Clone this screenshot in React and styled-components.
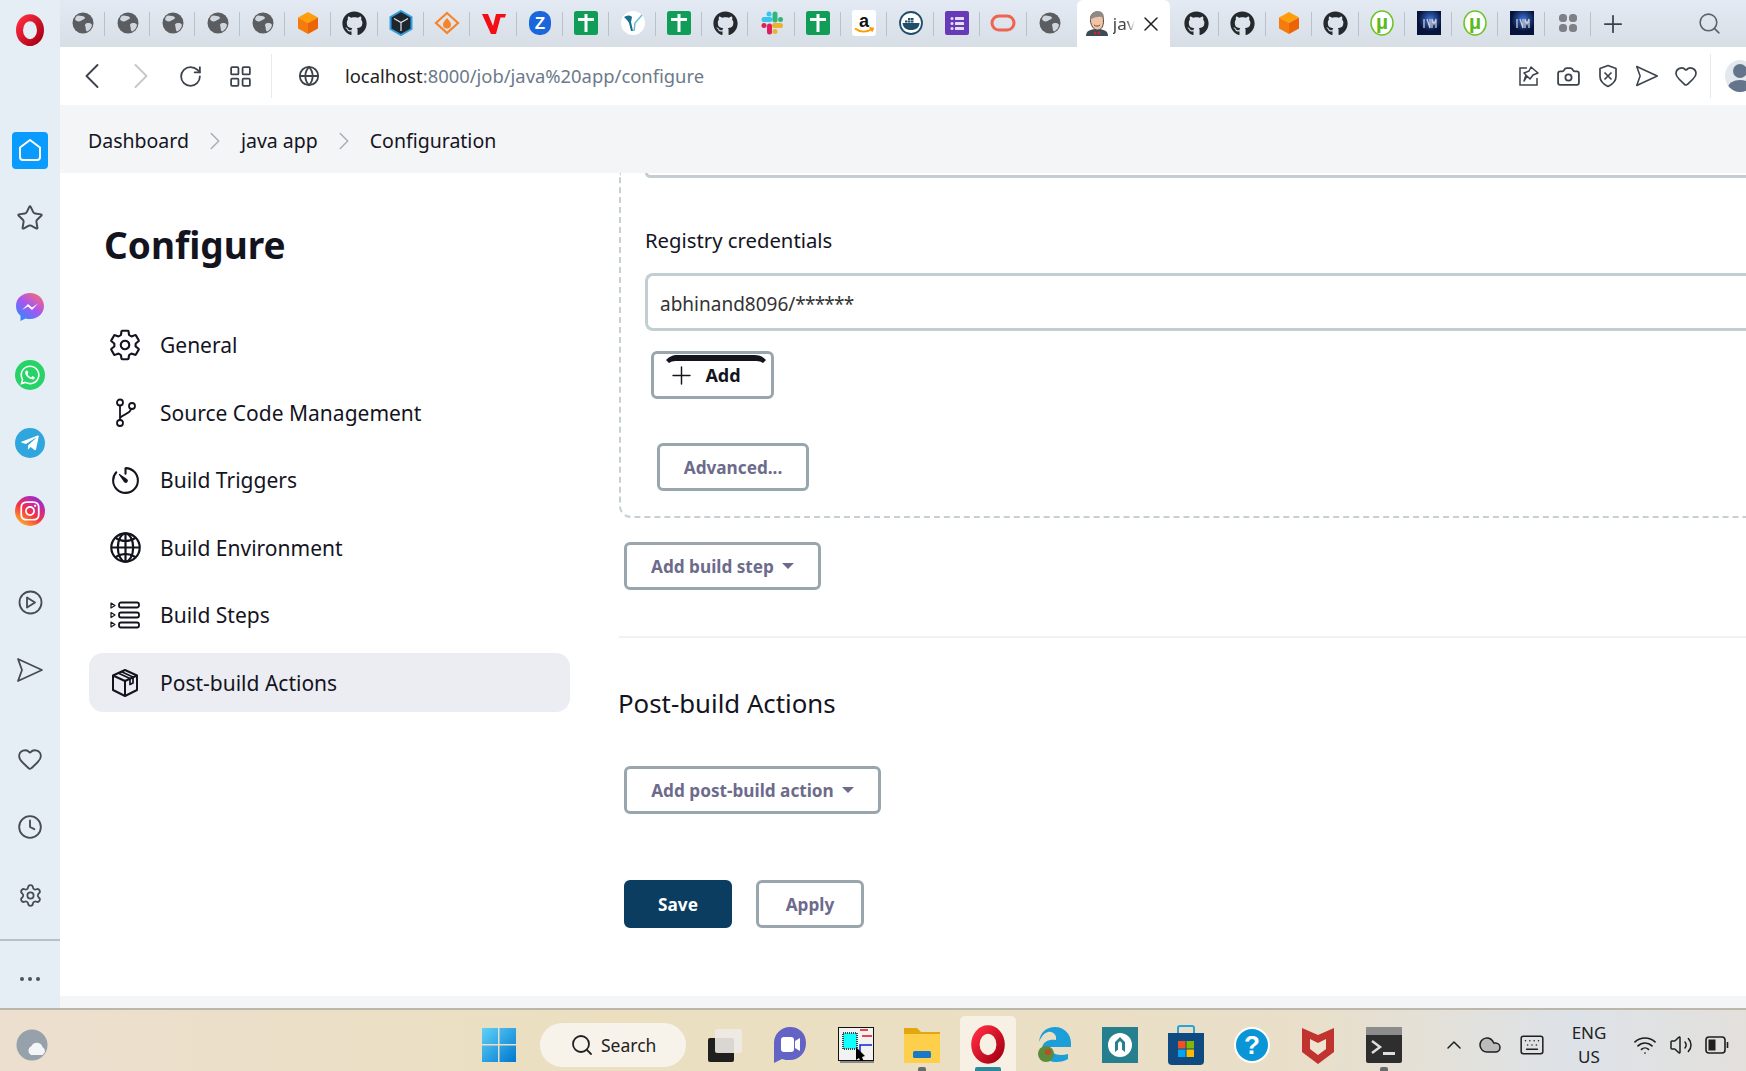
import React from 'react';
import styled, { createGlobalStyle } from 'styled-components';
import { FaGithub, FaWhatsapp, FaTelegramPlane, FaInstagram } from 'react-icons/fa';
import { IoSettingsOutline, IoTimerOutline, IoGlobeOutline } from 'react-icons/io5';
import {
  ChevronLeft, ChevronRight, RotateCw, LayoutGrid, Globe, X, Plus, Search, Camera,
  Heart, Star, Clock, Settings, Wifi, Volume2, ChevronUp, Keyboard, Cloud,
} from 'lucide-react';

const UI_FONT = '"Noto Sans", "Open Sans", sans-serif';

const GlobalStyle = createGlobalStyle`
  html, body { margin: 0; padding: 0; }
  body { font-family: ${UI_FONT}; color: #14141f; background: #fff; overflow: hidden; }
  * { box-sizing: border-box; }
  svg { flex: none; }
`;

const Screen = styled.div`
  width: 1746px;
  height: 1071px;
  display: flex;
  flex-direction: column;
  overflow: hidden;
`;

const Desktop = styled.div`
  height: 1008px;
  display: flex;
`;

const Sidebar = styled.aside`
  width: 60px;
  flex: none;
  display: flex;
  flex-direction: column;
  align-items: center;
  background: #e5edf5;
`;

const LogoSlot = styled.div`
  height: 60px;
  margin-bottom: 56px;
  display: flex;
  align-items: center;
  justify-content: center;
`;

const SideGroup = styled.div`
  display: flex;
  flex-direction: column;
  margin-bottom: ${(p) => p.$gap ?? 21}px;
`;

const SideItem = styled.div`
  width: 60px;
  height: 68px;
  display: flex;
  align-items: center;
  justify-content: center;
  color: #454c56;
`;

const HomeButton = styled.div`
  width: 36px;
  height: 37px;
  border-radius: 4px;
  background: #0a9bff;
  display: flex;
  align-items: center;
  justify-content: center;
`;

const Bubble = styled.div`
  width: 30px;
  height: 30px;
  border-radius: 50%;
  background: ${(p) => p.$bg};
  color: #fff;
  display: flex;
  align-items: center;
  justify-content: center;
`;

const SideFooter = styled.div`
  margin-top: auto;
  width: 100%;
  height: 69px;
  padding-top: 8px;
  border-top: 2px solid #b9c0ca;
  display: flex;
  align-items: center;
  justify-content: center;
  gap: 4px;
`;

const Dot = styled.span`
  width: 4px;
  height: 4px;
  border-radius: 50%;
  background: #4b525c;
`;

const Browser = styled.div`
  flex: 1;
  min-width: 0;
  display: flex;
  flex-direction: column;
`;

const TabStrip = styled.div`
  height: 47px;
  flex: none;
  display: flex;
  align-items: stretch;
  background: linear-gradient(180deg, #e3eaf3, #d7dee6);
`;

const TabSlot = styled.div`
  width: ${(p) => p.$w}px;
  flex: none;
  position: relative;
  display: flex;
  align-items: center;
  justify-content: center;
  padding-bottom: 1px;
  &::after {
    content: '';
    display: ${(p) => (p.$last ? 'none' : 'block')};
    position: absolute;
    right: 0;
    top: 12px;
    height: 24px;
    width: 1px;
    background: #b9c1cb;
  }
`;

const ActiveTab = styled.div`
  width: 93px;
  flex: none;
  background: #fff;
  border-radius: 6px 6px 0 0;
  display: flex;
  align-items: center;
  padding-left: 8px;
  margin: 0 3px 0 4px;
`;

const TabTitle = styled.span`
  width: 22px;
  margin-left: 4px;
  overflow: hidden;
  font-size: 17px;
  color: #444;
  white-space: nowrap;
  mask-image: linear-gradient(90deg, #000 60%, transparent);
`;

const NewTab = styled.div`
  margin-left: 9px;
  width: 26px;
  display: flex;
  align-items: center;
  justify-content: center;
  color: #3a414b;
`;

const StripSearch = styled.div`
  margin-left: auto;
  margin-right: 24px;
  display: flex;
  align-items: center;
  color: #5b626c;
`;

const AddressBar = styled.div`
  height: 58px;
  flex: none;
  background: #fff;
  display: flex;
  align-items: center;
  color: #3c434d;
`;

const NavGlyph = styled.div`
  width: ${(p) => p.$w}px;
  flex: none;
  display: flex;
  justify-content: center;
  color: ${(p) => p.$color || '#3c434d'};
`;

const BarDivider = styled.div`
  width: 1px;
  height: 44px;
  flex: none;
  margin-left: ${(p) => p.$ml || 0}px;
  background: #e6e9ed;
`;

const Url = styled.div`
  margin-left: 0;
  padding-bottom: 2px;
  font-size: 18.4px;
  color: #6c7a89;
  white-space: nowrap;
  & b { font-weight: 400; color: #222; }
`;

const BarActions = styled.div`
  margin-left: auto;
  display: flex;
  align-items: center;
  margin-right: -9px;
`;

const Avatar = styled.div`
  width: 30px;
  margin-left: 14px;
  height: 32px;
  border-radius: 50%;
  background: #e2e8ee;
  overflow: hidden;
  display: flex;
  justify-content: center;
`;

const Breadcrumb = styled.nav`
  height: 68px;
  flex: none;
  background: #f4f5f7;
  display: flex;
  align-items: center;
  padding: 3px 0 0 28px;
  font-size: 19.5px;
  color: #14141f;
`;

const Crumb = styled.span`
  white-space: nowrap;
`;

const CrumbSep = styled.span`
  width: 52px;
  display: flex;
  justify-content: center;
  color: #a9adb8;
`;

const Content = styled.div`
  flex: 1;
  min-height: 0;
  display: flex;
  overflow: hidden;
  background: #fff;
`;

const SidePanel = styled.div`
  width: 559px;
  flex: none;
  padding: 48px 49px 0 29px;
`;

const PageTitle = styled.h1`
  margin: 0 0 46.5px 15px;
  font-size: 37px;
  line-height: 48px;
  font-weight: 700;
  color: #14141f;
`;

const NavList = styled.div`
  display: flex;
  flex-direction: column;
  gap: 8.5px;
`;

const NavItem = styled.div`
  height: 59px;
  border-radius: 14px;
  display: flex;
  align-items: center;
  padding-left: 21px;
  gap: 20px;
  font-size: 21px;
  background: ${(p) => (p.$active ? '#ecedf2' : 'transparent')};
`;

const NavIcon = styled.div`
  width: 30px;
  height: 30px;
  flex: none;
  display: flex;
  align-items: center;
  justify-content: center;
  color: #14141f;
`;

const Main = styled.main`
  flex: 1;
  min-width: 0;
  display: flex;
  flex-direction: column;
  align-items: flex-start;
`;

const DashedBox = styled.div`
  align-self: stretch;
  margin-right: -20px;
  padding: 0 0 25px 24px;
  border-left: 2px dashed #c6d0d4;
  border-bottom: 2px dashed #c6d0d4;
  border-bottom-left-radius: 12px;
  display: flex;
  flex-direction: column;
  align-items: flex-start;
`;

const FieldStub = styled.div`
  align-self: stretch;
  height: 5px;
  border: 3px solid #c3ced2;
  border-top: none;
  border-radius: 0 0 0 8px;
`;

const FieldLabel = styled.label`
  margin-top: 48px;
  font-size: 20.3px;
  line-height: 28px;
  color: #14141f;
`;

const TextField = styled.div`
  align-self: stretch;
  height: 58px;
  margin-top: 19px;
  padding: 3px 0 0 12px;
  border: 3px solid #c3ced2;
  border-right: none;
  border-radius: 8px 0 0 8px;
  display: flex;
  align-items: center;
  font-size: 19px;
  color: #333;
`;

const Mask = styled.span`
  letter-spacing: -0.8px;
`;

const Button = styled.button`
  position: relative;
  width: ${(p) => p.$w}px;
  height: 48px;
  margin: ${(p) => p.$m || '0'};
  padding: 0;
  border: 3px solid ${(p) => (p.$primary ? '#0a3d5f' : '#9aa6ad')};
  border-radius: 6px;
  background: ${(p) => (p.$primary ? '#0a3d5f' : '#fff')};
  color: ${(p) => (p.$primary ? '#fff' : '#6d6b8c')};
  font-family: ${UI_FONT};
  font-size: 17.2px;
  font-weight: 700;
  display: flex;
  align-items: center;
  justify-content: center;
  gap: 8px;
`;

const AddButton = styled(Button)`
  color: #14141f;
  font-size: 18px;
  gap: 9px;
  padding-right: 17px;
`;

const Caret = styled.span`
  width: 0;
  height: 0;
  border-left: 6px solid transparent;
  border-right: 6px solid transparent;
  border-top: 6px solid #6d6b8c;
`;

const Scribble = styled.svg`
  position: absolute;
  left: 12px;
  top: 0;
`;

const Rule = styled.div`
  align-self: stretch;
  height: 2px;
  margin-top: 46px;
  background: #f0f1f3;
`;

const SectionTitle = styled.h2`
  margin: 49px 0 0 -1px;
  font-size: 25.8px;
  line-height: 32px;
  font-weight: 400;
  color: #14141f;
`;

const ButtonRow = styled.div`
  display: flex;
  gap: 24px;
  margin: 66px 0 0 5px;
`;

const PageFoot = styled.div`
  height: 12px;
  flex: none;
  background: #f4f5f7;
`;

const Taskbar = styled.footer`
  height: 63px;
  flex: none;
  display: flex;
  align-items: center;
  border-top: 2px solid #bcb6ab;
  background: linear-gradient(90deg, #ecdfcf 0%, #ebdfc0 35%, #eadfc4 60%, #e9dfca 75%, #dde2e8 90%, #e3e0dc 100%);
`;

const TaskSlot = styled.div`
  width: ${(p) => p.$w || 66}px;
  height: 61px;
  flex: none;
  position: relative;
  display: flex;
  align-items: center;
  justify-content: center;
  padding-top: 8px;
  margin-left: ${(p) => p.$ml || 0}px;
  color: #1f1f1f;
  ${(p) => p.$active && `
    background: rgba(255,255,255,0.55);
    border-radius: 5px 5px 0 0;
    width: 56px;
    height: 55px;
    padding-top: 2px;
    margin: 6px 5px 0;
  `}
`;

const RunDot = styled.span`
  position: absolute;
  bottom: 0;
  left: 50%;
  transform: translateX(-50%);
  width: ${(p) => (p.$wide ? 26 : 8)}px;
  height: 4px;
  border-radius: 2px 2px 0 0;
  background: ${(p) => (p.$wide ? '#2a8a9c' : '#6b6b6b')};
`;

const SearchPill = styled.div`
  width: 146px;
  height: 44px;
  margin: 8px 5px 0 8px;
  flex: none;
  border-radius: 22px;
  background: #f8f3ea;
  display: flex;
  align-items: center;
  padding-left: 30px;
  gap: 7px;
  font-size: 17.5px;
  color: #222;
`;

const Tray = styled.div`
  display: flex;
  align-items: center;
  padding-left: 19px;
`;

const Lang = styled.div`
  width: 60px;
  padding-top: 8px;
  text-align: center;
  font-size: 17px;
  line-height: 24px;
  color: #222;
  margin: 0 8px 0 6px;
`;

/* ---------- drawn icons ---------- */

const OperaLogo = ({ size = 30 }) => (
  <svg width={size} height={size * 1.08} viewBox="0 0 30 32">
    <defs>
      <linearGradient id="op" x1="0" y1="0" x2="1" y2="1">
        <stop offset="0" stopColor="#ff2b40" />
        <stop offset="1" stopColor="#a70014" />
      </linearGradient>
    </defs>
    <ellipse cx="15" cy="16" rx="10.5" ry="12.5" fill="none" stroke="url(#op)" strokeWidth="7" />
  </svg>
);

const WebGlobe = () => (
  <svg width="22" height="22" viewBox="0 0 22 22">
    <circle cx="11" cy="11" r="10.5" fill="#5b5d60" />
    <path d="M6 3.500c3 .5 5 0 6.500 1.500s-1 2.500-3 3.500S6 10 4 8.500s0-4.500 2-5zM14 11.500c2.500-1 5-.5 6 1.500-.5 3-2.500 5.500-5 6.500-1.500-1-1-2.500-1.500-4.500s-1-2.500.5-3.500z" fill="#cfd6de" />
  </svg>
);

const GhIcon = () => <FaGithub size={25} color="#25292e" />;

const OrangeCube = ({ size = 24 }) => (
  <svg width={size} height={size} viewBox="0 0 24 24">
    <path d="M12 1l10 5.500L12 12 2 6.500z" fill="#ff9d0a" />
    <path d="M2 6.500L12 12v11L2 17.500z" fill="#f57c0c" />
    <path d="M22 6.500L12 12v11l10-5.500z" fill="#ec6408" />
  </svg>
);

const BlackCube = () => (
  <svg width="24" height="26" viewBox="0 0 24 26">
    <path d="M12 1l10.500 6v12L12 25 1.500 19V7z" fill="#20262d" stroke="#2f9fe0" strokeWidth="2" />
    <path d="M5 8.500l7 4 7-4M12 12.500V21" fill="none" stroke="#dfe6ee" strokeWidth="1.2" />
  </svg>
);

const DiamondIcon = () => (
  <svg width="26" height="24" viewBox="0 0 26 24">
    <path d="M13 2l11 10-11 10L2 12z" fill="none" stroke="#f5842a" strokeWidth="2.2" />
    <path d="M13 7c2.500 3 4 4.500 4 6.500a4 4 0 0 1-8 0c0-2 1.500-3.500 4-6.500z" fill="#f5842a" />
  </svg>
);

const RedV = () => (
  <svg width="26" height="24" viewBox="0 0 26 24">
    <path d="M1 3h6l5 12L15 3h10l-1 3.500h-4.500L15 23h-5z" fill="#f30d14" />
  </svg>
);

const ZIcon = () => (
  <svg width="24" height="26" viewBox="0 0 24 26">
    <rect x="1" y="1" width="22" height="24" rx="10" fill="#1a66dd" />
    <text x="12" y="19" textAnchor="middle" fontFamily="Liberation Sans, sans-serif" fontWeight="700" fontSize="17" fill="#fff">Z</text>
  </svg>
);

const SheetIcon = () => (
  <svg width="24" height="24" viewBox="0 0 24 24">
    <rect width="24" height="24" rx="2.500" fill="#0f9d58" />
    <path d="M10.500 3h3v4H20v3h-6.500v11h-3V10H4V7h6.500z" fill="#fff" />
  </svg>
);

const BirdIcon = () => (
  <svg width="24" height="26" viewBox="0 0 24 26">
    <circle cx="12" cy="13" r="12" fill="#fff" />
    <path d="M3 7c3-2 6-2 8 0l-1 5 2 9h-2l-2-8C7 11 5 9 3 7z" fill="#1a6e8e" />
    <path d="M21 5l-7 8-1 8" fill="none" stroke="#6bb9d6" strokeWidth="1.500" />
  </svg>
);

const SlackIcon = () => (
  <svg width="24" height="26" viewBox="0 0 24 26">
    <g strokeWidth="5" strokeLinecap="round" fill="none">
      <path d="M4 9.500h6" stroke="#36c5f0" />
      <path d="M15 4v6" stroke="#2eb67d" />
      <path d="M14.500 15.500h6" stroke="#ecb22e" />
      <path d="M9.500 16v6" stroke="#e01e5a" />
    </g>
    <circle cx="9" cy="4" r="2.500" fill="#36c5f0" />
    <circle cx="20.500" cy="9.500" r="2.500" fill="#2eb67d" />
    <circle cx="15" cy="21.500" r="2.500" fill="#ecb22e" />
    <circle cx="4" cy="15.500" r="2.500" fill="#e01e5a" />
  </svg>
);

const AmazonIcon = () => (
  <svg width="24" height="26" viewBox="0 0 24 26">
    <rect width="24" height="26" rx="3" fill="#fff" />
    <path d="M3 18.500c5 4 12 4 17 .5M17.500 18l3.500.5-1 3" fill="none" stroke="#ff9900" strokeWidth="1.800" />
    <text x="12" y="17" textAnchor="middle" fontFamily="Liberation Sans, sans-serif" fontWeight="700" fontSize="18" fill="#111">a</text>
  </svg>
);

const DockerIcon = () => (
  <svg width="24" height="24" viewBox="0 0 24 24">
    <circle cx="12" cy="12" r="11" fill="#fff" stroke="#1f4e68" strokeWidth="1.800" />
    <path d="M3.500 12h17c0 4.500-3.500 7-8.500 7s-8-2.500-8.500-7zM6 9.500h2.500v2H6zM9 9.500h2.500v2H9zM12 9.500h2.500v2H12zM9 7h2.500v2H9zM12 7h2.500v2H12z" fill="#1f4e68" />
  </svg>
);

const FormsIcon = () => (
  <svg width="24" height="24" viewBox="0 0 24 24">
    <rect width="24" height="24" rx="2" fill="#673ab7" />
    <g fill="#e6ddf5">
      <circle cx="7" cy="7.500" r="1.500" /><rect x="10" y="6" width="9" height="3" rx="0.500" />
      <circle cx="7" cy="12.500" r="1.500" /><rect x="10" y="11" width="9" height="3" rx="0.500" />
      <circle cx="7" cy="17.500" r="1.500" /><rect x="10" y="16" width="9" height="3" rx="0.500" />
    </g>
  </svg>
);

const OracleIcon = () => (
  <svg width="26" height="20" viewBox="0 0 26 20">
    <rect x="2" y="3" width="22" height="14" rx="7" fill="none" stroke="#ee6450" strokeWidth="3" />
  </svg>
);

const TorrentIcon = () => (
  <svg width="24" height="26" viewBox="0 0 24 26">
    <ellipse cx="12" cy="13" rx="11" ry="12" fill="#fff" stroke="#6cc327" strokeWidth="1.500" />
    <text x="12" y="19" textAnchor="middle" fontFamily="Liberation Sans, sans-serif" fontWeight="700" fontSize="21" fill="#5fb91d">µ</text>
  </svg>
);

const IdmIcon = () => (
  <svg width="24" height="24" viewBox="0 0 24 24">
    <defs>
      <radialGradient id="idm" cx="0.55" cy="0.35" r="0.5">
        <stop offset="0" stopColor="#3d73d8" />
        <stop offset="1" stopColor="#06133a" />
      </radialGradient>
    </defs>
    <rect width="24" height="24" fill="url(#idm)" />
    <path d="M7 8v9M10 8l3 9V8M15 17V8l2 5 2-5v9" fill="none" stroke="#c9cdd6" strokeWidth="1.300" />
  </svg>
);

const AppsIcon = () => (
  <svg width="20" height="20" viewBox="0 0 20 20" fill="#7d8086">
    <rect x="1" y="1" width="8" height="8" rx="3.500" />
    <rect x="11" y="1" width="8" height="8" rx="3.500" />
    <rect x="1" y="11" width="8" height="8" rx="3.500" />
    <rect x="11" y="11" width="8" height="8" rx="3.500" />
  </svg>
);

const JenkinsFace = () => (
  <svg width="24" height="27" viewBox="0 0 24 27">
    <path d="M1 26c0-5 4-7 11-7s11 2 11 7z" fill="#3d4a57" />
    <path d="M12 2c-5 0-7 4-6.500 9 .3 4 3 9 7 9s6-4 6-9c0-5-2.500-9-6.500-9z" fill="#efc4a8" stroke="#55493f" strokeWidth="1" />
    <path d="M5 10C5 4 9 1 13 1s6 3 6 7c-3-2-9-2-14 2z" fill="#8f8a84" />
    <path d="M9 21l3 2 3-2v4l-3-2-3 2z" fill="#c8272c" />
    <path d="M9 15c2 1.500 4 1.500 6 0" fill="none" stroke="#7a4a33" strokeWidth="1" />
  </svg>
);

const HomeGlyph = () => (
  <svg width="26" height="26" viewBox="0 0 26 26">
    <path d="M13 3L23 10.500V20a3 3 0 0 1-3 3H6a3 3 0 0 1-3-3V10.500z" fill="none" stroke="#fff" strokeWidth="2" strokeLinejoin="round" />
  </svg>
);

const Messenger = () => (
  <svg width="30" height="30" viewBox="0 0 30 30">
    <defs>
      <linearGradient id="msg" x1="0.2" y1="1" x2="0.9" y2="0">
        <stop offset="0" stopColor="#2a8cff" />
        <stop offset="0.5" stopColor="#a855f0" />
        <stop offset="1" stopColor="#ff6d6d" />
      </linearGradient>
    </defs>
    <path d="M15 1C7 1 1 6.500 1 14c0 4 1.700 7.400 4.500 9.800V29l5-2.600c1.400.4 2.900.6 4.500.6 8 0 14-5.700 14-13S23 1 15 1z" fill="url(#msg)" />
    <path d="M7 18l6-6 4 3.500 6-4-6 6.500-4-3.500z" fill="#fff" />
  </svg>
);

const PlayCircle = () => (
  <svg width="25" height="25" viewBox="0 0 25 25" fill="none" stroke="#454c56" strokeWidth="1.800">
    <circle cx="12.500" cy="12.500" r="11" />
    <path d="M9 7.500l8 5-8 5z" strokeLinejoin="round" />
  </svg>
);

const SendGlyph = ({ size = 28, color = '#454c56' }) => (
  <svg width={size} height={size} viewBox="0 0 28 28" fill="none" stroke={color} strokeWidth="1.800" strokeLinejoin="round">
    <path d="M2 3l24 11L2 25l4-11z" />
  </svg>
);

const PinBox = () => (
  <svg width="22" height="22" viewBox="0 0 22 22" fill="none" stroke="#3c434d" strokeWidth="1.500">
    <path d="M9 3H2v17h17v-7" />
    <path d="M13 2l7 6-5 2-3 4-3-3-3 5 2-6-2-2 5-2z" strokeLinejoin="round" />
  </svg>
);

const ShieldX = () => (
  <svg width="20" height="24" viewBox="0 0 20 24" fill="none" stroke="#3c434d" strokeWidth="1.700">
    <path d="M10 1.500l8 3v8c0 5-4 8-8 10-4-2-8-5-8-10v-8z" strokeLinejoin="round" />
    <path d="M6.500 8.500l7 7M13.500 8.500l-7 7" />
  </svg>
);

const BranchIcon = () => (
  <svg width="24" height="30" viewBox="0 0 24 30" fill="none" stroke="#14141f" strokeWidth="1.800">
    <circle cx="7" cy="4.500" r="3" />
    <circle cx="7" cy="25" r="3" />
    <circle cx="19" cy="8" r="3" />
    <path d="M7 7.500V22M18 11c-1 5-8 5-11 9" />
  </svg>
);

const StepsIcon = () => (
  <svg width="30" height="28" viewBox="0 0 30 28" fill="none" stroke="#14141f" strokeWidth="1.800">
    <path d="M1 2l4 2.500L1 7zM1 11.500l4 2.500-4 2.500zM1 21l4 2.500L1 26z" strokeWidth="1.200" strokeLinejoin="round" />
    <rect x="9" y="1.500" width="20" height="5" rx="2" />
    <rect x="9" y="11.500" width="20" height="5" rx="2" />
    <rect x="9" y="21.500" width="20" height="5" rx="2" />
  </svg>
);

const PackageIcon = () => (
  <svg width="30" height="30" viewBox="0 0 30 30" fill="none" stroke="#14141f" strokeWidth="2" strokeLinejoin="round">
    <path d="M15 2l12 5.500v14.500L15 28 3 22V7.500z" />
    <path d="M3 7.500L15 13l12-5.500M15 13v15" />
    <path d="M8 5l12 5.500v6l3-1.500v-6L11 3.500" strokeWidth="1.700" />
  </svg>
);

const WinLogo = () => (
  <svg width="36" height="36" viewBox="0 0 36 36">
    <defs>
      <linearGradient id="win" x1="0" y1="0" x2="1" y2="1">
        <stop offset="0" stopColor="#5fd2f7" />
        <stop offset="1" stopColor="#0077d0" />
      </linearGradient>
    </defs>
    <path d="M1 1h16v16H1zM18.500 1H35v16H18.500zM1 18.500h16V35H1zM18.500 18.500H35V35H18.500z" fill="url(#win)" />
  </svg>
);

const WeatherIcon = () => (
  <svg width="34" height="32" viewBox="0 0 34 32">
    <circle cx="16" cy="16" r="15.500" fill="#97a1ab" />
    <path d="M15 26a5 5 0 0 1 .5-9 6 6 0 0 1 11 1 4.500 4.500 0 0 1 0 8z" fill="#f4f5f6" />
  </svg>
);

const TaskViewIcon = () => (
  <svg width="36" height="34" viewBox="0 0 36 34">
    <rect x="2" y="10" width="26" height="24" rx="2" fill="#1f1f1f" />
    <rect x="9" y="1" width="27" height="24" rx="2" fill="#eeeae6" fillOpacity="0.9" />
  </svg>
);

const MeetIcon = () => (
  <svg width="34" height="36" viewBox="0 0 34 36">
    <path d="M17 0C8 0 1 7 1 16v20l8-4c2.500 1 5 1 8 1 9 0 16-7 16-17S26 0 17 0z" fill="#6363c6" />
    <rect x="8" y="10" width="13" height="15" rx="3" fill="#fff" />
    <path d="M22 14l5-3v13l-5-3z" fill="#fff" />
  </svg>
);

const ChipIcon = () => (
  <svg width="36" height="36" viewBox="0 0 36 36">
    <rect x="0.500" y="0.500" width="35" height="33" fill="#f2f2f2" stroke="#111" />
    <rect x="5" y="6" width="14" height="16" fill="#1ff" stroke="#444" strokeDasharray="1 1" strokeWidth="2" />
    <path d="M22 3h8M24 9h10" fill="none" stroke="#e01010" strokeWidth="1.500" />
    <path d="M22 30V18h12" fill="none" stroke="#1120e0" strokeWidth="1.500" />
    <path d="M18 20l9 9-3 1 2 5-3 1-2-5-3 2z" fill="#000" />
    <rect x="2" y="34" width="34" height="2" fill="#888" />
  </svg>
);

const FolderIcon = () => (
  <svg width="36" height="36" viewBox="0 0 36 36">
    <path d="M0 1h13l4 4h19v31H0z" fill="#e2a70f" />
    <path d="M0 7h36v29H0z" fill="#fdcf4a" />
    <rect x="9" y="24" width="18" height="7" rx="1.500" fill="#1a78c8" />
  </svg>
);

const EdgeIcon = () => (
  <svg width="36" height="38" viewBox="0 0 36 38">
    <path d="M3 16C4 6 11 1 19 1c9 0 16 7 16 16v4H14c0 6 8 10 18 7v5c-3 2-7 3-12 3C10 36 5 28 6 22c1-7 8-9 14-8 1-5-3-9-8-8-4 1-7 5-9 10z" fill="#1c9fd8" />
    <circle cx="10" cy="28" r="8" fill="#5a8c3a" />
    <circle cx="12" cy="26" r="3" fill="#c24a2c" />
  </svg>
);

const TealIcon = () => (
  <svg width="36" height="36" viewBox="0 0 36 36">
    <rect width="36" height="36" fill="#267f8f" />
    <circle cx="18" cy="18" r="12" fill="#fff" />
    <path d="M13 25V15l5-5 5 5v10l-5-4z" fill="#267f8f" />
    <path d="M16 24v-8l2-2 2 2v8l-2-2z" fill="#fff" />
  </svg>
);

const StoreIcon = () => (
  <svg width="36" height="40" viewBox="0 0 36 40">
    <path d="M10 8V3a2 2 0 0 1 2-2h12a2 2 0 0 1 2 2v5" fill="none" stroke="#2aa3d9" strokeWidth="2" />
    <path d="M0 8h36v28a4 4 0 0 1-4 4H4a4 4 0 0 1-4-4z" fill="#0f4a80" />
    <rect x="10" y="16" width="7.500" height="7.500" fill="#f25022" />
    <rect x="18.500" y="16" width="7.500" height="7.500" fill="#7fba00" />
    <rect x="10" y="24.500" width="7.500" height="7.500" fill="#00a4ef" />
    <rect x="18.500" y="24.500" width="7.500" height="7.500" fill="#ffb900" />
  </svg>
);

const HelpIcon = () => (
  <svg width="36" height="36" viewBox="0 0 36 36">
    <circle cx="18" cy="18" r="17" fill="#0a96d6" stroke="#fff" strokeWidth="2" />
    <text x="18" y="27" textAnchor="middle" fontFamily="Liberation Sans, sans-serif" fontWeight="700" fontSize="26" fill="#fff">?</text>
  </svg>
);

const McAfeeIcon = () => (
  <svg width="34" height="38" viewBox="0 0 34 38">
    <path d="M1 2l16 7 16-7v24L17 38 1 26z" fill="#c0332f" />
    <path d="M9 13l8 4 8-4v10l-8 6-8-6z" fill="#efe4d0" />
  </svg>
);

const TerminalIcon = () => (
  <svg width="36" height="36" viewBox="0 0 36 36">
    <rect width="36" height="36" rx="2" fill="#2e2e2e" />
    <rect width="36" height="8" fill="#8c8c8c" />
    <path d="M6 14l8 6-8 6" fill="none" stroke="#ddd" strokeWidth="2.500" />
    <rect x="17" y="25" width="12" height="3" fill="#ddd" />
  </svg>
);

const BatteryIcon = () => (
  <svg width="24" height="18" viewBox="0 0 24 18" fill="none" stroke="#1f1f1f" strokeWidth="1.600">
    <rect x="1" y="1" width="19" height="16" rx="3" />
    <rect x="3.500" y="3.500" width="7" height="11" fill="#1f1f1f" stroke="none" />
    <path d="M22.500 6v6" />
  </svg>
);

/* ---------- data ---------- */

const leadingTabs = [
  ...[0, 1, 2, 3, 4].map(() => ({ w: 45, icon: <WebGlobe /> })),
  ...[
    <OrangeCube />, <GhIcon />, <BlackCube />, <DiamondIcon />, <RedV />, <ZIcon />, <SheetIcon />,
    <BirdIcon />, <SheetIcon />, <GhIcon />, <SlackIcon />, <SheetIcon />, <AmazonIcon />,
    <DockerIcon />, <FormsIcon />, <OracleIcon />, <WebGlobe />,
  ].map((icon) => ({ w: 46.35, icon })),
];

const trailingTabs = [
  <GhIcon />, <GhIcon />, <OrangeCube />, <GhIcon />, <TorrentIcon />, <IdmIcon />,
  <TorrentIcon />, <IdmIcon />, <AppsIcon />,
];

const navItems = [
  { label: 'General', icon: <IoSettingsOutline size={34} /> },
  { label: 'Source Code Management', icon: <BranchIcon /> },
  { label: 'Build Triggers', icon: <IoTimerOutline size={33} /> },
  { label: 'Build Environment', icon: <IoGlobeOutline size={35} /> },
  { label: 'Build Steps', icon: <StepsIcon /> },
  { label: 'Post-build Actions', icon: <PackageIcon />, active: true },
];

const taskApps = [
  { icon: <TaskViewIcon /> },
  { icon: <MeetIcon /> },
  { icon: <ChipIcon /> },
  { icon: <FolderIcon />, running: true },
  { icon: <OperaLogo size={36} />, active: true },
  { icon: <EdgeIcon /> },
  { icon: <TealIcon /> },
  { icon: <StoreIcon /> },
  { icon: <HelpIcon /> },
  { icon: <McAfeeIcon /> },
  { icon: <TerminalIcon />, running: true },
];

const App = () => (
  <Screen>
    <GlobalStyle />
    <Desktop>
      <Sidebar>
        <LogoSlot><OperaLogo /></LogoSlot>
        <SideGroup>
          <SideItem><HomeButton><HomeGlyph /></HomeButton></SideItem>
          <SideItem><Star size={28} strokeWidth={1.7} /></SideItem>
        </SideGroup>
        <SideGroup $gap={23}>
          <SideItem><Messenger /></SideItem>
          <SideItem><Bubble $bg="#25d366"><FaWhatsapp size={22} /></Bubble></SideItem>
          <SideItem><Bubble $bg="#2fa6de"><FaTelegramPlane size={20} /></Bubble></SideItem>
          <SideItem>
            <Bubble $bg="linear-gradient(35deg, #fdb32d 10%, #f5333f 45%, #c32aa3 70%, #7a2fe0 100%)">
              <FaInstagram size={22} />
            </Bubble>
          </SideItem>
        </SideGroup>
        <SideGroup>
          <SideItem><PlayCircle /></SideItem>
          <SideItem><SendGlyph /></SideItem>
        </SideGroup>
        <SideGroup $gap={0}>
          <SideItem><Heart size={26} strokeWidth={1.7} /></SideItem>
          <SideItem><Clock size={26} strokeWidth={1.7} /></SideItem>
          <SideItem><Settings size={25} strokeWidth={1.7} /></SideItem>
        </SideGroup>
        <SideFooter><Dot /><Dot /><Dot /></SideFooter>
      </Sidebar>

      <Browser>
        <TabStrip>
          {leadingTabs.map((tab, i) => (
            <TabSlot key={i} $w={tab.w} $last={i === leadingTabs.length - 1}>{tab.icon}</TabSlot>
          ))}
          <ActiveTab>
            <JenkinsFace />
            <TabTitle>java app</TabTitle>
            <NavGlyph $w={32} $color="#222"><X size={24} strokeWidth={1.5} /></NavGlyph>
          </ActiveTab>
          {trailingTabs.map((icon, i) => (
            <TabSlot key={i} $w={46.5}>{icon}</TabSlot>
          ))}
          <NewTab><Plus size={28} strokeWidth={1.5} /></NewTab>
          <StripSearch><Search size={25} strokeWidth={1.5} /></StripSearch>
        </TabStrip>

        <AddressBar>
          <NavGlyph $w={64}><ChevronLeft size={44} strokeWidth={1.05} /></NavGlyph>
          <NavGlyph $w={34} $color="#c4c8cd"><ChevronRight size={44} strokeWidth={1.05} /></NavGlyph>
          <NavGlyph $w={65}><RotateCw size={25} strokeWidth={1.7} /></NavGlyph>
          <NavGlyph $w={34}><LayoutGrid size={25} strokeWidth={1.7} /></NavGlyph>
          <NavGlyph $w={14} />
          <BarDivider />
          <NavGlyph $w={73}><Globe size={22} strokeWidth={2} /></NavGlyph>
          <Url><b>localhost</b>:8000/job/java%20app/configure</Url>
          <BarActions>
            <NavGlyph $w={39}><PinBox /></NavGlyph>
            <NavGlyph $w={40}><Camera size={25} strokeWidth={1.7} /></NavGlyph>
            <NavGlyph $w={39}><ShieldX /></NavGlyph>
            <NavGlyph $w={40}><SendGlyph size={24} color="#3c434d" /></NavGlyph>
            <NavGlyph $w={38}><Heart size={24} strokeWidth={1.7} /></NavGlyph>
            <BarDivider $ml={5} />
            <Avatar>
              <svg width="30" height="32" viewBox="0 0 30 32">
                <circle cx="15" cy="11" r="7" fill="#64748a" />
                <ellipse cx="15" cy="28" rx="12" ry="8" fill="#64748a" />
              </svg>
            </Avatar>
          </BarActions>
        </AddressBar>

        <Breadcrumb>
          <Crumb>Dashboard</Crumb>
          <CrumbSep><ChevronRight size={30} strokeWidth={1.2} /></CrumbSep>
          <Crumb>java app</Crumb>
          <CrumbSep><ChevronRight size={30} strokeWidth={1.2} /></CrumbSep>
          <Crumb>Configuration</Crumb>
        </Breadcrumb>

        <Content>
          <SidePanel>
            <PageTitle>Configure</PageTitle>
            <NavList>
              {navItems.map((item) => (
                <NavItem key={item.label} $active={item.active}>
                  <NavIcon>{item.icon}</NavIcon>
                  {item.label}
                </NavItem>
              ))}
            </NavList>
          </SidePanel>
          <Main>
            <DashedBox>
              <FieldStub />
              <FieldLabel>Registry credentials</FieldLabel>
              <TextField><span>abhinand8096/<Mask>******</Mask></span></TextField>
              <AddButton $w={123} $m="20px 0 0 6px">
                <Plus size={29} strokeWidth={1.2} />
                Add
                <Scribble width="100" height="10" viewBox="0 0 100 10">
                  <path d="M0 6C3 3 6 1 12 1h76c6 0 9 2 12 5l-3 3c-3-2-6-2-9-2H12C9 7 6 7 3 9z" fill="#14141f" />
                </Scribble>
              </AddButton>
              <Button $w={152} $m="44px 0 0 12px">Advanced...</Button>
            </DashedBox>
            <Button $w={197} $m="24px 0 0 5px">Add build step<Caret /></Button>
            <Rule />
            <SectionTitle>Post-build Actions</SectionTitle>
            <Button $w={257} $m="47px 0 0 5px">Add post-build action<Caret /></Button>
            <ButtonRow>
              <Button $w={108} $primary>Save</Button>
              <Button $w={108}>Apply</Button>
            </ButtonRow>
          </Main>
        </Content>
        <PageFoot />
      </Browser>
    </Desktop>

    <Taskbar>
      <TaskSlot><WeatherIcon /></TaskSlot>
      <TaskSlot $ml={400}><WinLogo /></TaskSlot>
      <SearchPill><Search size={24} strokeWidth={1.8} />Search</SearchPill>
      {taskApps.map((app, i) => (
        <TaskSlot key={i} $active={app.active}>
          {app.icon}
          {app.running && <RunDot />}
          {app.active && <RunDot $wide />}
        </TaskSlot>
      ))}
      <Tray>
        <TaskSlot $w={36}><ChevronUp size={24} strokeWidth={1.5} /></TaskSlot>
        <TaskSlot $w={36}><Cloud size={24} strokeWidth={1.5} fill="#bbb" /></TaskSlot>
        <TaskSlot $w={42} $ml={3}><Keyboard size={26} strokeWidth={1.4} /></TaskSlot>
        <Lang>ENG<br />US</Lang>
        <TaskSlot $w={36}><Wifi size={24} strokeWidth={1.7} /></TaskSlot>
        <TaskSlot $w={36}><Volume2 size={24} strokeWidth={1.5} /></TaskSlot>
        <TaskSlot $w={36}><BatteryIcon /></TaskSlot>
      </Tray>
    </Taskbar>
  </Screen>
);

export default App;
